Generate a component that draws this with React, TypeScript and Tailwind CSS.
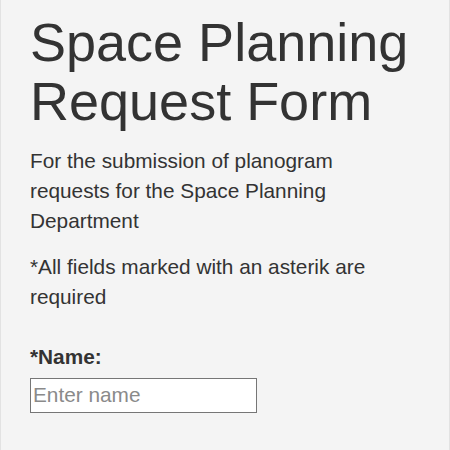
export default function App() {
  return (
    <div
      className="min-h-[450px] w-[450px] border-x border-[#e2e2e2] bg-[#f4f4f4] px-[29px] pt-[13px] text-[#333333]"
      style={{ fontFamily: '"Liberation Sans", Arial, sans-serif' }}
    >
      <h1 className="text-[54px] font-normal leading-[1.1]">
        Space Planning Request Form
      </h1>
      <div className="max-w-[360px]">
        <p className="mt-[14px] text-[20.8px] leading-[30px]">
          For the submission of planogram requests for the Space Planning Department
        </p>
        <p className="mt-[16px] text-[20.8px] leading-[30px]">
          *All fields marked with an asterik are required
        </p>
      </div>
      <form className="mt-[30px]">
        <label htmlFor="name" className="block text-[20.8px] font-bold leading-[30px]">
          *Name:
        </label>
        <input
          id="name"
          type="text"
          placeholder="Enter name"
          className="mt-[6px] h-[35px] w-[227px] border border-[#767676] bg-white px-[2px] text-[20.8px] placeholder:text-[#8a8a8a]"
        />
      </form>
    </div>
  );
}
